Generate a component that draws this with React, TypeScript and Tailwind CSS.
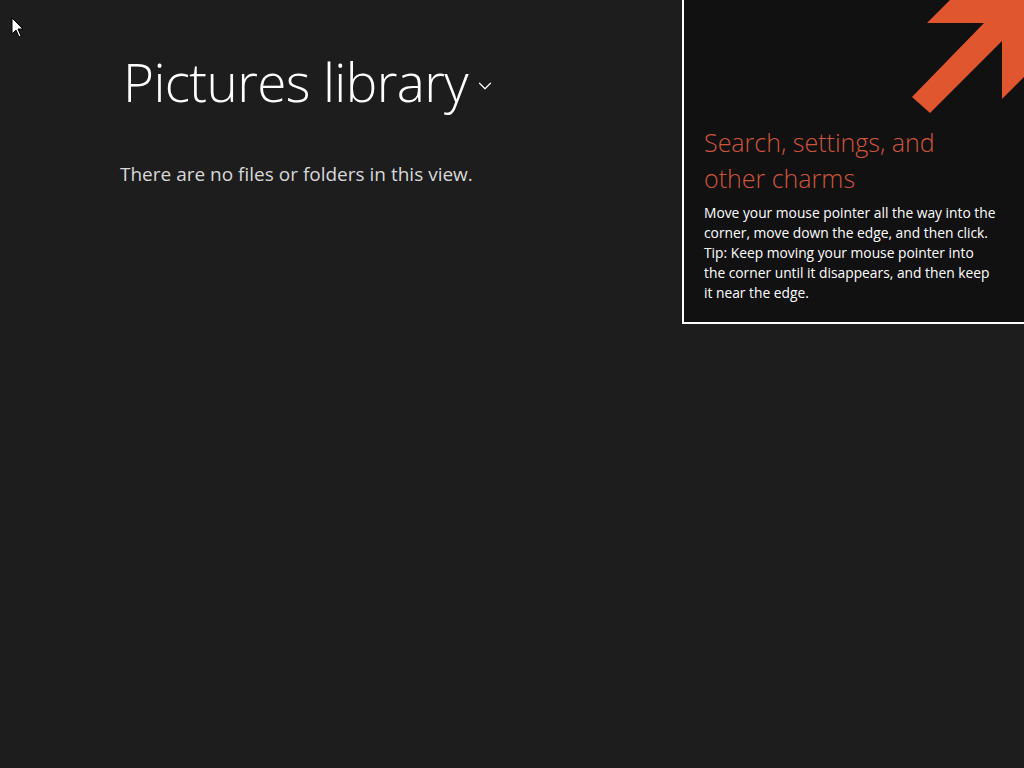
import { ChevronDown } from 'lucide-react';

export default function App() {
  return (
    <div
      className="relative h-[768px] w-[1024px] overflow-hidden bg-[#1d1d1d] text-white"
      style={{ fontFamily: '"Open Sans", "Noto Sans", sans-serif' }}
    >
      {/* Mouse cursor */}
      <svg className="absolute left-[11px] top-[17px]" width="14" height="22" viewBox="0 0 14 22">
        <path d="M1 1 L1 17 L5 13 L8 20 L10 19 L7 12 L12 12 Z" fill="#fff" stroke="#000" strokeWidth="1" />
      </svg>

      {/* Main content */}
      <div className="pl-[120px] pt-[46px]">
        <div className="flex items-center pl-[3px]">
          <h1 className="text-[53px] font-light leading-[72px] tracking-[-0.6px] text-white">Pictures library</h1>
          <ChevronDown className="ml-[6px] mt-[8px] h-[22px] w-[22px] text-white" strokeWidth={1.3} />
        </div>
        <p className="mt-[42px] text-[19px] text-[#d8d8d8]">There are no files or folders in this view.</p>
      </div>

      {/* Charms tip panel */}
      <div className="absolute right-0 top-0 h-[324px] w-[342px] border-b-2 border-l-2 border-white bg-[#111111]">
        <svg className="absolute left-0 top-0" width="342" height="322" viewBox="682 0 342 322">
          <polygon
            points="910,97 982,23 925,23 948,0 1024,0 1024,75 1000,99 1000,41 928,113"
            fill="#e0562f"
          />
        </svg>
        <div className="pl-[20px] pt-[124px]">
          <h2 className="text-[25px] font-light leading-[36px] text-[#d0553d]">
            Search, settings, and
            <br />
            other charms
          </h2>
          <p className="mt-[7px] whitespace-nowrap text-[13.8px] leading-[20px] text-white">
            Move your mouse pointer all the way into the
            <br />
            corner, move down the edge, and then click.
            <br />
            Tip: Keep moving your mouse pointer into
            <br />
            the corner until it disappears, and then keep
            <br />
            it near the edge.
          </p>
        </div>
      </div>
    </div>
  );
}
